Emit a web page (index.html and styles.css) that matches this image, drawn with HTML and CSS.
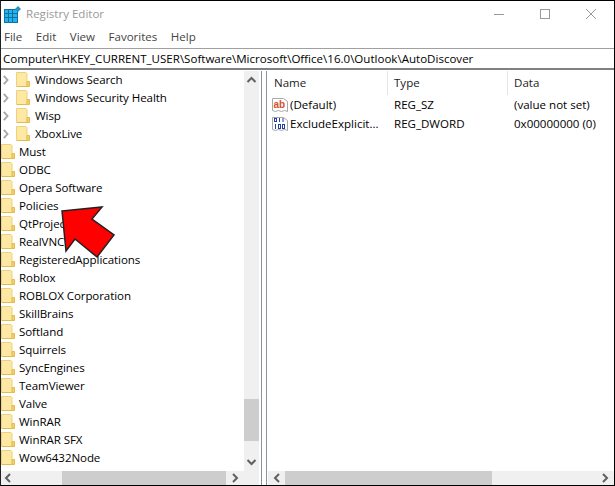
FILE: index.html
```html
<!DOCTYPE html>
<html lang="en">
<head>
<meta charset="utf-8">
<title>Registry Editor</title>
<link rel="stylesheet" href="styles.css">
</head>
<body>
<svg class="defs" width="0" height="0">
  <symbol id="folder" viewBox="0 0 14 16"><path d="M.5 .5h9.500l1 1v13h-10.500z" fill="#fde8a4" stroke="#efd07c"/><path d="M11 9.500h2.500v5h-2.500z" fill="#f4cf6c" stroke="#e6bb4e"/><path d="M1 14.500h10" stroke="#e6bb4e"/></symbol>
  <symbol id="chev" viewBox="0 0 16 16"><path d="M3 3.500l4 4.500-4 4.500" stroke="#a6a6a6" stroke-width="2" fill="none"/></symbol>
</svg>
<div class="window">
  <header class="titlebar">
    <svg class="appicon" width="17" height="17" viewBox="0 0 17 17">
      <rect x="0" y="3" width="14" height="14" fill="#0f6fa8"/>
      <g fill="#25b4ea">
        <rect x="1" y="4" width="3" height="3"/><rect x="5" y="4" width="3" height="3"/><rect x="9" y="4" width="4" height="3"/>
        <rect x="1" y="8" width="3" height="3"/><rect x="5" y="8" width="3" height="3"/><rect x="9" y="8" width="4" height="3"/>
        <rect x="1" y="12" width="3" height="4"/><rect x="5" y="12" width="3" height="4"/><rect x="9" y="12" width="4" height="4"/>
      </g>
      <path d="M14 0l3 3-3 3-3-3z" fill="#2a8fc4"/>
    </svg>
    <span class="title">Registry Editor</span>
    <div class="controls">
      <svg class="ctl" width="46" height="12" viewBox="0 0 46 12"><path d="M18 6.500h10" stroke="#999" fill="none"/></svg>
      <svg class="ctl" width="46" height="12" viewBox="0 0 46 12"><rect x="18.500" y="1.500" width="9" height="9" stroke="#999" fill="none"/></svg>
      <svg class="ctl" width="46" height="12" viewBox="0 0 46 12"><path d="M18 1l10 10M28 1L18 11" stroke="#999" fill="none"/></svg>
    </div>
  </header>
  <nav class="menu"><span>File</span><span>Edit</span><span>View</span><span>Favorites</span><span>Help</span></nav>
  <div class="address">Computer\HKEY_CURRENT_USER\Software\Microsoft\Office\16.0\Outlook\AutoDiscover</div>
  <main class="panes">
    <section class="tree">
      <div class="tree-body">
        <ul class="rows">
          <li class="row nested"><svg class="chev"><use href="#chev"/></svg><svg class="folder"><use href="#folder"/></svg><span>Windows Search</span></li>
          <li class="row nested"><svg class="chev"><use href="#chev"/></svg><svg class="folder"><use href="#folder"/></svg><span>Windows Security Health</span></li>
          <li class="row nested"><svg class="chev"><use href="#chev"/></svg><svg class="folder"><use href="#folder"/></svg><span>Wisp</span></li>
          <li class="row nested"><svg class="chev"><use href="#chev"/></svg><svg class="folder"><use href="#folder"/></svg><span>XboxLive</span></li>
          <li class="row"><svg class="folder"><use href="#folder"/></svg><span>Must</span></li>
          <li class="row"><svg class="folder"><use href="#folder"/></svg><span>ODBC</span></li>
          <li class="row"><svg class="folder"><use href="#folder"/></svg><span>Opera Software</span></li>
          <li class="row"><svg class="folder"><use href="#folder"/></svg><span>Policies</span></li>
          <li class="row"><svg class="folder"><use href="#folder"/></svg><span>QtProject</span></li>
          <li class="row"><svg class="folder"><use href="#folder"/></svg><span>RealVNC</span></li>
          <li class="row"><svg class="folder"><use href="#folder"/></svg><span>RegisteredApplications</span></li>
          <li class="row"><svg class="folder"><use href="#folder"/></svg><span>Roblox</span></li>
          <li class="row"><svg class="folder"><use href="#folder"/></svg><span>ROBLOX Corporation</span></li>
          <li class="row"><svg class="folder"><use href="#folder"/></svg><span>SkillBrains</span></li>
          <li class="row"><svg class="folder"><use href="#folder"/></svg><span>Softland</span></li>
          <li class="row"><svg class="folder"><use href="#folder"/></svg><span>Squirrels</span></li>
          <li class="row"><svg class="folder"><use href="#folder"/></svg><span>SyncEngines</span></li>
          <li class="row"><svg class="folder"><use href="#folder"/></svg><span>TeamViewer</span></li>
          <li class="row"><svg class="folder"><use href="#folder"/></svg><span>Valve</span></li>
          <li class="row"><svg class="folder"><use href="#folder"/></svg><span>WinRAR</span></li>
          <li class="row"><svg class="folder"><use href="#folder"/></svg><span>WinRAR SFX</span></li>
          <li class="row"><svg class="folder"><use href="#folder"/></svg><span>Wow6432Node</span></li>
        </ul>
        <div class="vscroll">
          <svg class="sb-arrow" width="15" height="17" viewBox="0 0 15 17"><path d="M3.500 11l4-4 4 4" stroke="#606060" stroke-width="2" fill="none"/></svg>
          <div class="vtrack"><div class="vthumb"></div></div>
          <svg class="sb-arrow" width="15" height="16" viewBox="0 0 15 16"><path d="M3.500 5l4 4 4-4" stroke="#606060" stroke-width="2" fill="none"/></svg>
        </div>
      </div>
      <div class="hscroll">
        <svg class="sb-arrow" width="15" height="14" viewBox="0 0 15 14"><path d="M9 3l-4 4 4 4" stroke="#606060" stroke-width="2" fill="none"/></svg>
        <div class="htrack"><div class="hthumb tree-thumb"></div></div>
        <svg class="sb-arrow" width="18" height="14" viewBox="0 0 18 14"><path d="M7 3l4 4-4 4" stroke="#606060" stroke-width="2" fill="none"/></svg>
        <div class="corner"></div>
      </div>
    </section>
    <div class="splitter"></div>
    <section class="values">
      <div class="head">
        <div class="col c-name">Name</div>
        <div class="col c-type">Type</div>
        <div class="col c-data">Data</div>
      </div>
      <div class="vrow">
        <div class="c-name cell">
          <svg width="16" height="16" viewBox="0 0 16 16"><path d="M.5 1.500h11l4 3v10l-3-1-3 1-3-1-3 1-3-1z" fill="#fff" stroke="#a8a8a8"/><text x="1.500" y="10.500" class="ab">ab</text></svg>
          <span>(Default)</span>
        </div>
        <div class="c-type cell">REG_SZ</div>
        <div class="c-data cell">(value not set)</div>
      </div>
      <div class="vrow">
        <div class="c-name cell">
          <svg width="16" height="16" viewBox="0 0 16 16"><path d="M.5 1.500h11l4 3v10l-3-1-3 1-3-1-3 1-3-1z" fill="#fff" stroke="#a8a8a8"/><g stroke="#1f3fa8" fill="none"><rect x="2.500" y="2.500" width="2" height="3"/><path d="M7.500 2v4M11 2v4M3.500 8v5"/><rect x="6.500" y="8.500" width="2" height="4"/><rect x="10.500" y="8.500" width="2" height="4"/></g></svg>
          <span>ExcludeExplicit...</span>
        </div>
        <div class="c-type cell">REG_DWORD</div>
        <div class="c-data cell">0x00000000 (0)</div>
      </div>
      <div class="spacer"></div>
      <div class="hscroll">
        <svg class="sb-arrow" width="17" height="14" viewBox="0 0 17 14"><path d="M11 3l-4 4 4 4" stroke="#606060" stroke-width="2" fill="none"/></svg>
        <div class="htrack"><div class="hthumb values-thumb"></div></div>
        <svg class="sb-arrow" width="17" height="14" viewBox="0 0 17 14"><path d="M6 3l4 4-4 4" stroke="#606060" stroke-width="2" fill="none"/></svg>
      </div>
    </section>
  </main>
  <svg class="pointer" width="56" height="56" viewBox="0 0 56 56"><path d="M2 6L42 2 32 14 54 30 37 52 15 34 6 46z" fill="#f00" stroke="#222" stroke-width="1.500"/></svg>
</div>
</body>
</html>
```
FILE: styles.css
```css
* { box-sizing: border-box; }
html, body { margin: 0; padding: 0; }
body { width: 615px; height: 486px; overflow: hidden; background: #fff; font: 11.55px/16px "Open Sans", "Noto Sans", sans-serif; color: #000; }
.defs { position: absolute; }
.window { position: relative; width: 615px; height: 486px; display: flex; flex-direction: column; border-top: 1px solid #000; border-left: 1px solid #222; border-bottom: 1px solid #000; border-right: 1px solid #000; }
.titlebar { flex: none; height: 26px; display: flex; align-items: center; padding-left: 3px; }
.appicon { flex: none; }
.title { margin-left: 5px; color: #999; }
.controls { margin-left: auto; display: flex; }
.ctl { display: block; }
.menu { flex: none; height: 20px; display: flex; gap: 13.500px; align-items: center; padding-left: 3px; color: #444; }
.address { flex: none; height: 22px; margin-top: 1px; border-top: 1px solid #a0a0a0; border-bottom: 2px solid #808080; padding: 2px 0 0 2px; white-space: nowrap; }
.panes { flex: 1; min-height: 0; display: flex; padding-top: 1px; }
.tree { flex: none; width: 258px; margin-right: 2px; display: flex; flex-direction: column; }
.tree-body { flex: 1; min-height: 0; display: flex; }
.rows { flex: 1; margin: 0; padding: 0; list-style: none; overflow: hidden; letter-spacing: -.08px; }
.row { height: 18px; display: flex; align-items: center; white-space: nowrap; }
.chev { flex: none; width: 15px; height: 16px; }
.folder { flex: none; width: 14px; height: 16px; }
.row span { margin-left: 4px; }
.nested span { margin-left: 5px; }
.vscroll { flex: none; width: 15px; display: flex; flex-direction: column; background: #f0f0f0; }
.sb-arrow { flex: none; display: block; background: #f0f0f0; }
.vtrack { flex: 1; display: flex; flex-direction: column; justify-content: flex-end; padding-bottom: 14px; }
.vthumb { height: 42px; background: #cdcdcd; }
.hscroll { flex: none; height: 14px; display: flex; background: #f0f0f0; }
.htrack { flex: 1; display: flex; }
.hthumb { flex: 1; background: #cdcdcd; }
.tree-thumb { margin-left: 46px; }
.values-thumb { margin-right: 105px; }
.corner { flex: none; width: 15px; }
.splitter { flex: none; width: 6px; border-left: 1px solid #8a949c; border-right: 1px solid #8a949c; }
.values { flex: 1; min-width: 0; display: flex; flex-direction: column; padding-left: 1px; }
.head { flex: none; height: 24px; display: flex; align-items: center; color: #222; }
.col { height: 24px; line-height: 24px; border-right: 1px solid #e5e5e5; }
.c-name { flex: none; width: 120px; padding-left: 6px; }
.c-type { flex: none; width: 120px; padding-left: 6px; }
.c-data { flex: 1; padding-left: 6px; border-right: 0; }
.vrow { flex: none; height: 19px; display: flex; align-items: center; }
.cell { display: flex; align-items: center; white-space: nowrap; }
.c-name.cell { padding-left: 4px; gap: 2px; }
.ab { font: bold 10px "Liberation Sans", sans-serif; fill: #d5502c; }
.spacer { flex: 1; }
.pointer { position: absolute; left: 59px; top: 204px; }
```
